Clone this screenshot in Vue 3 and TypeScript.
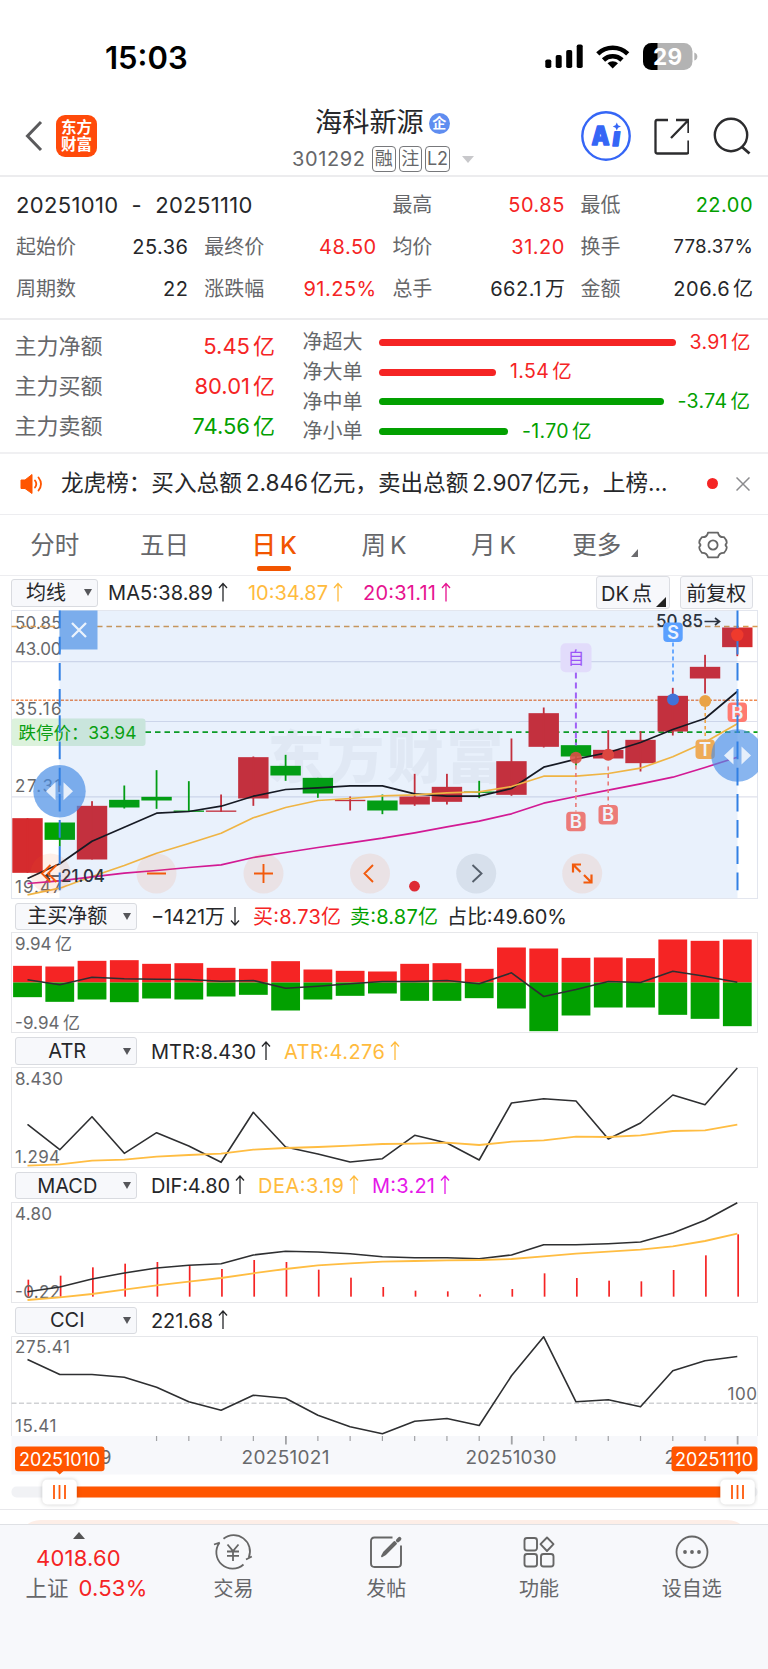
<script setup lang="ts">
type Tone = 'ink' | 'red' | 'green' | 'gold' | 'pink' | 'violet'

interface Stat { label: string; value: string; unit?: string; tone: Tone; cls?: string }
interface Reading { text: string; tone: Tone; arrow?: 'up' | 'down'; width: number }

const dayX = (i: number): number => 27 + 32.264 * i

const points = (values: number[], origin: number): string =>
  values.map((v, i) => `${dayX(i).toFixed(1)},${(origin + v / 3).toFixed(1)}`).join(' ')

const stats: Stat[] = [
  { label: '最高', value: '50.85', tone: 'red' },
  { label: '最低', value: '22.00', tone: 'green' },
  { label: '起始价', value: '25.36', tone: 'ink' },
  { label: '最终价', value: '48.50', tone: 'red' },
  { label: '均价', value: '31.20', tone: 'red' },
  { label: '换手', value: '778.37%', tone: 'ink', cls: 'compact' },
  { label: '周期数', value: '22', tone: 'ink' },
  { label: '涨跌幅', value: '91.25%', tone: 'red' },
  { label: '总手', value: '662.1', unit: '万', tone: 'ink' },
  { label: '金额', value: '206.6', unit: '亿', tone: 'ink' },
]

const mainFunds: Stat[] = [
  { label: '主力净额', value: '5.45', unit: '亿', tone: 'red' },
  { label: '主力买额', value: '80.01', unit: '亿', tone: 'red' },
  { label: '主力卖额', value: '74.56', unit: '亿', tone: 'green' },
]

const orders = [
  { label: '净超大', value: '3.91', tone: 'red', width: 297 },
  { label: '净大单', value: '1.54', tone: 'red', width: 117.5 },
  { label: '净中单', value: '-3.74', tone: 'green', width: 285 },
  { label: '净小单', value: '-1.70', tone: 'green', width: 129.5 },
]

const averages: Reading[] = [
  { text: 'MA5:38.89', tone: 'ink', arrow: 'up', width: 105 },
  { text: '10:34.87', tone: 'gold', arrow: 'up', width: 80 },
  { text: '20:31.11', tone: 'pink', arrow: 'up', width: 73 },
]
const flowReadings: Reading[] = [
  { text: '−1421万', tone: 'ink', arrow: 'down', width: 74 },
  { text: '买:8.73亿', tone: 'red', width: 88 },
  { text: '卖:8.87亿', tone: 'green', width: 88 },
  { text: '占比:49.60%', tone: 'ink', width: 120 },
]
const atrReadings: Reading[] = [
  { text: 'MTR:8.430', tone: 'ink', arrow: 'up', width: 105 },
  { text: 'ATR:4.276', tone: 'gold', arrow: 'up', width: 101 },
]
const macdReadings: Reading[] = [
  { text: 'DIF:4.80', tone: 'ink', arrow: 'up', width: 79 },
  { text: 'DEA:3.19', tone: 'gold', arrow: 'up', width: 86 },
  { text: 'M:3.21', tone: 'violet', arrow: 'up', width: 63 },
]
const cciReadings: Reading[] = [{ text: '221.68', tone: 'ink', arrow: 'up', width: 62 }]

// body top, body bottom, wick top, wick bottom, rising
type Candle = [number, number, number, number, boolean]
const candles: Candle[] = [
  [653, 817, 653, 817, true], [666, 718, 666, 738, false], [616, 777, 602, 777, true],
  [598, 621, 555, 624, false], [589, 600, 509, 625, false], [630, 634, 542, 634, false],
  [630, 634, 582, 634, true], [470, 594, 468, 616, true], [496, 525, 463, 541, false],
  [532, 579, 532, 592, false], [598, 602, 588, 630, true], [600, 630, 582, 641, false],
  [588, 612, 520, 616, true], [559, 604, 520, 612, true], [573, 577, 541, 593, false],
  [482, 583, 414, 586, true], [338, 439, 321, 441, true], [434, 468, 416, 495, false],
  [448, 474, 389, 477, true], [418, 488, 392, 513, true], [286, 393, 262, 405, true],
  [199, 234, 163, 279, true], [81, 140, 81, 167, true],
]
const ma5 = points([834, 790, 722, 680, 638, 633, 617, 587, 567, 562, 556, 556, 580, 587, 587, 564, 500, 476, 456, 426, 387, 354, 273], 600)
const ma10 = points([883, 863, 828, 795, 758, 729, 698, 652, 621, 600, 594, 586, 583, 577, 574, 558, 527, 527, 519, 503, 469, 425, 370], 600)
const ma20 = points([849, 841, 829, 818, 810, 801, 793, 771, 756, 741, 727, 713, 697, 679, 662, 640, 608, 588, 569, 550, 530, 501, 470], 600)

const flowBars: [number, number][] = [
  [214, 308], [216, 322], [199, 315], [197, 323], [208, 312], [206, 315], [220, 306], [223, 301],
  [200, 348], [225, 315], [229, 304], [231, 297], [208, 319], [206, 319], [223, 311], [159, 342],
  [162, 410], [190, 363], [189, 339], [191, 339], [135, 361], [139, 373], [135, 395],
]
const flowLine = points([256, 271, 248, 253, 254, 255, 260, 258, 281, 275, 268, 261, 261, 258, 268, 235, 306, 285, 261, 264, 230, 245, 263], 895)
const mtrLine = points([688, 764, 665, 775, 713, 753, 802, 652, 756, 777, 801, 791, 721, 744, 795, 624, 611, 618, 732, 684, 600, 629, 519], 895)
const atrLine = points([812, 808, 797, 794, 785, 780, 776, 764, 759, 756, 752, 747, 746, 743, 750, 740, 736, 725, 726, 721, 708, 706, 689], 895)
const difLine = points([350, 336, 312, 294, 279, 271, 266, 240, 229, 231, 236, 245, 248, 248, 251, 240, 209, 209, 206, 201, 174, 136, 83], 1175)
const deaLine = points([375, 367, 357, 344, 331, 320, 309, 295, 282, 271, 265, 260, 258, 256, 255, 252, 244, 236, 230, 224, 214, 198, 176], 1175)
const macdTops = [314, 302, 277, 266, 261, 272, 282, 255, 261, 284, 308, 336, 347, 349, 358, 342, 295, 309, 317, 319, 285, 241, 178]
const cciLine = points([555, 600, 600, 608, 638, 682, 707, 662, 671, 722, 757, 778, 740, 732, 753, 604, 487, 682, 676, 697, 589, 559, 546], 1175)

const priceLabels: [string, number][] = [['50.85', 628.6], ['43.00', 654.7], ['35.16', 714.7], ['27.31', 791], ['19.47', 892]]
const badges = [
  { t: 'S', x: 672.5, y: 631.7, fill: '#5aa0ff' },
  { t: 'B', x: 575.4, y: 821, fill: '#ec7b78' },
  { t: 'B', x: 607.7, y: 814.3, fill: '#ec7b78' },
  { t: 'T', x: 704.7, y: 748.7, fill: '#eeab58' },
  { t: 'B', x: 736.8, y: 711.7, fill: '#ff7a70' },
]
const ticks = Array.from({ length: 19 }, (_, k) => k + 4)
const grips = [59, 737]
</script>

<template>
  <main class="screen">
    <section class="status">
      <span class="clock">15:03</span>
      <svg class="status-icons" width="154" height="30" viewBox="544 42 154 30">
        <rect x="545.3" y="59.500" width="6" height="8.500" rx="1.800" />
        <rect x="555.7" y="55" width="6" height="13" rx="1.800" />
        <rect x="566.2" y="50" width="6" height="18" rx="1.800" />
        <rect x="576.7" y="44.500" width="6" height="23.500" rx="1.800" />
        <g fill="none" stroke="#000" stroke-width="4.600">
          <path d="M597.800 53.800a21.500 21.500 0 0 1 29.900 0" />
          <path d="M603.500 60a13.400 13.400 0 0 1 18.500 0" />
        </g>
        <path d="M607.500 63.200a7.700 7.700 0 0 1 10.500 0L612.700 68.400z" />
        <rect x="643" y="43" width="49.500" height="27" rx="8.500" fill="#b3b3b3" />
        <path d="M651.500 43H657.500V70H651.500A8.500 8.500 0 0 1 643 61.500V51.500A8.500 8.500 0 0 1 651.500 43z" />
        <path d="M694.300 52.500q3 1 3 4t-3 4z" fill="#b3b3b3" />
        <text x="667.500" y="64.500" font-size="22.500" font-weight="700" fill="#fff" text-anchor="middle" textLength="29">29</text>
      </svg>
    </section>

    <header class="header">
      <div class="header-left">
        <svg width="18" height="32" viewBox="0 0 18 32"><path d="M16 2L2.500 16L16 30" fill="none" stroke="#5a5a5c" stroke-width="3" /></svg>
        <div class="logo"><span>东方</span><span>财富</span></div>
      </div>
      <div class="title">
        <div class="name">海科新源<i class="corp">企</i></div>
        <div class="code"><span class="num">301292</span><b>融</b><b>注</b><b class="l2">L2</b>
          <svg width="12" height="7" viewBox="0 0 12 7"><path d="M0 0H12L6 7z" fill="#c8c8cb" /></svg>
        </div>
      </div>
      <div class="header-right">
        <svg class="ai" width="50" height="50" viewBox="0 0 50 50">
          <circle cx="25" cy="25" r="23.700" fill="none" stroke="#3566f6" stroke-width="2.400" />
          <g fill="#3566f6" stroke="#3566f6" stroke-width="1.400" stroke-linejoin="round" font-size="26" font-weight="900">
            <text x="10.500" y="33.500" textLength="18" lengthAdjust="spacingAndGlyphs">A</text>
            <text transform="translate(30.500 34.500) skewX(-8)" x="0" y="0">ı</text>
          </g>
          <path d="M35.800 11.500L37 14.300L40 15.500L37 16.800L35.800 19.500L34.500 16.800L31.800 15.500L34.500 14.300z" fill="#3566f6" />
        </svg>
        <svg width="36" height="37" viewBox="0 0 36 37" fill="none" stroke="#2c2c2e" stroke-width="2.300">
          <path d="M15 2H4Q2.500 2 2.500 4V33.500Q2.500 35.500 4.500 35.500H33.500Q35.500 35.500 35.500 33.500V22.500M23 2H35.500V15M35 2.500L18 20" />
        </svg>
        <svg width="38" height="38" viewBox="0 0 38 38" fill="none" stroke="#2c2c2e" stroke-width="2.400">
          <circle cx="18" cy="18" r="16.200" /><path d="M28.500 29.500L36.500 36.500" stroke-width="2.800" />
        </svg>
      </div>
    </header>

    <section class="stats">
      <div class="range">20251010&nbsp; - &nbsp;20251110</div>
      <div v-for="s in stats" :key="s.label" class="stat">
        <span>{{ s.label }}</span><em :class="[s.tone, s.cls]">{{ s.value }}<u v-if="s.unit">{{ s.unit }}</u></em>
      </div>
    </section>

    <section class="funds">
      <div class="fund-totals">
        <div v-for="f in mainFunds" :key="f.label"><span>{{ f.label }}</span><em :class="f.tone">{{ f.value }}<u>{{ f.unit }}</u></em></div>
      </div>
      <div class="fund-orders">
        <div v-for="o in orders" :key="o.label">
          <span>{{ o.label }}</span>
          <i :class="['bar', 'bg-' + o.tone]" :style="{ width: o.width + 'px' }"></i>
          <em :class="o.tone">{{ o.value }}<u>亿</u></em>
        </div>
      </div>
    </section>

    <section class="news">
      <svg width="24" height="22" viewBox="0 0 24 22">
        <path d="M1 7H5L12 1.500V20.500L5 15.500H1z" fill="#f50" stroke="#f50" stroke-linejoin="round" />
        <path d="M15 7.500q2.600 3.500 0 7M18.500 4.500q5 6.500 0 13" fill="none" stroke="#f50" stroke-width="1.800" stroke-linecap="round" />
      </svg>
      <p>龙虎榜：买入总额<u>2.846</u>亿元，卖出总额<u>2.907</u>亿元，上榜...</p>
      <i class="dot"></i>
      <svg width="14" height="14" viewBox="0 0 14 14"><path d="M.5.500L13.500 13.500M13.500.500L.5 13.500" stroke="#8b8b8e" stroke-width="1.500" /></svg>
    </section>

    <nav class="tabs">
      <span>分时</span><span>五日</span><span class="on">日<u>K</u></span><span>周<u>K</u></span><span>月<u>K</u></span>
      <span>更多<svg width="7" height="8" viewBox="0 0 7 8"><path d="M7 0V8H0z" fill="#6b6b6e" /></svg></span>
      <span>
        <svg class="gear" width="30" height="28" viewBox="-15 -14 30 28" fill="none" stroke="#666" stroke-width="1.800" stroke-linejoin="round">
          <path d="M-5 -12.300H5Q6 -7.500 11 -7.800Q14.500 -4 13.500 -1.500Q11.500 0 13.500 1.500Q14.500 4 11 7.800Q6 7.500 5 12.300H-5Q-6 7.500 -11 7.800Q-14.500 4 -13.500 1.500Q-11.500 0 -13.500 -1.500Q-14.500 -4 -11 -7.800Q-6 -7.500 -5 -12.300z" />
          <circle r="4.600" />
        </svg>
      </span>
    </nav>

    <div class="row tools">
      <div class="select short"><span>均线</span><i></i></div>
      <div class="readings">
        <svg v-for="r in averages" :key="r.text" :class="r.tone" :width="r.width + 20" height="27" :viewBox="`0 0 ${r.width + 20} 27`">
          <text x="0" y="21" font-size="20" fill="currentColor" :textLength="r.width">{{ r.text }}</text>
          <path :transform="`translate(${r.width + 10} 3.5)`" d="M0 19V1M-4 5.500L0 1L4 5.500" fill="none" stroke="currentColor" stroke-width="1.300" />
        </svg>
      </div>
      <button class="dk">DK<u>点</u><svg width="10" height="10" viewBox="0 0 10 10"><path d="M10 0V10H0z" fill="#222" /></svg></button>
      <button>前复权</button>
    </div>

    <svg class="chart" width="747" height="289" viewBox="10.500 609.500 747 289">
      <rect x="11" y="610" width="746" height="288" fill="#fff" stroke="#e3e6ee" />
      <g stroke="#dfe1ec" stroke-width="1.200"><path d="M11 661.200H757M11 721H757M11 796.300H757" /></g>
      <text class="mark" x="267" y="777" font-size="57" font-weight="900" textLength="236">东方财富</text>
      <g class="axis" font-size="17">
        <text v-for="p in priceLabels" :key="p[0]" x="14.500" :y="p[1]" textLength="46.500">{{ p[0] }}</text>
      </g>
      <path d="M11 626H757" stroke="#d89a50" stroke-width="1.500" stroke-dasharray="5.500 4" />
      <path d="M11 699.700H757" stroke="#f08a50" stroke-width="1.500" stroke-dasharray="3 1.500" />
      <rect x="11" y="718" width="134" height="27.500" rx="3" fill="#dcf2dc" />
      <path d="M145 731.700H757" stroke="#0aa014" stroke-width="1.700" stroke-dasharray="5.500 4" />
      <g v-for="(c, i) in candles" :key="i" :fill="c[4] ? '#d52b2e' : '#02a300'">
        <rect :x="dayX(i) - 15.200" :y="600 + c[0] / 3" width="30.400" :height="(c[1] - c[0]) / 3" />
        <rect :x="dayX(i) - 0.900" :y="600 + c[2] / 3" width="1.800" :height="(c[3] - c[2]) / 3" />
      </g>
      <rect x="59" y="610.500" width="678" height="287" fill="#1a6fdc" opacity=".095" />
      <g fill="none" stroke-width="1.700" stroke-linejoin="round">
        <polyline :points="ma5" stroke="#161a24" /><polyline :points="ma10" stroke="#efb444" /><polyline :points="ma20" stroke="#d21a94" />
      </g>
      <text x="18" y="738" font-size="17.500" fill="#0a9f12" textLength="118">跌停价：33.94</text>
      <g font-size="17" font-weight="500" fill="#2b3340">
        <text x="655.500" y="626.700" textLength="47">50.85</text><path d="M704 621H719M714.500 617.500L719 621L714.500 624.500" fill="none" stroke="#2b3340" stroke-width="1.700" />
        <text x="60.500" y="881.300" textLength="44">21.04</text><path d="M60 875.500H45M49.500 872L45 875.500L49.500 879" fill="none" stroke="#2b3340" stroke-width="1.700" />
      </g>

      <g fill="none" stroke-width="1.600">
        <path d="M575.400 672V745" stroke="#a060f5" stroke-width="2" stroke-dasharray="6 4" />
        <path d="M672.500 642V681" stroke="#4a98ff" stroke-dasharray="4 3" />
        <path d="M704.700 706V739" stroke="#eda445" stroke-dasharray="3.500 3" />
        <path d="M575.400 765V811M607.700 766V805" stroke="#e97977" stroke-dasharray="4 3.500" />
      </g>
      <circle cx="575.400" cy="757.300" r="6" fill="#dc4f45" opacity=".9" /><circle cx="607.700" cy="754.300" r="6" fill="#dc4640" />
      <circle cx="672.500" cy="699" r="6" fill="#4273d8" /><circle cx="704.700" cy="700.500" r="6" fill="#e9a345" />
      <rect x="560" y="642.700" width="31" height="29" rx="5" fill="#e2dcfb" />
      <text x="575.500" y="663.500" font-size="16.500" fill="#9b55f7" text-anchor="middle">自</text>
      <g v-for="(b, i) in badges" :key="i">
        <rect :x="b.x - 9.700" :y="b.y - 9.700" width="19.400" height="19.400" rx="4" :fill="b.fill" />
        <text :x="b.x" :y="b.y + 6.500" font-size="18.500" font-weight="600" fill="#eef3fd" text-anchor="middle">{{ b.t }}</text>
      </g>

      <g fill="#f26522" fill-opacity=".1">
        <circle cx="50" cy="873" r="20" /><circle cx="156" cy="873" r="20" /><circle cx="263" cy="873" r="20" />
        <circle cx="369.500" cy="873" r="20" /><circle cx="581.700" cy="873" r="20" />
      </g>
      <circle cx="475.700" cy="873" r="20" fill="#22364f" opacity=".09" />
      <g fill="none" stroke="#f25a0c" stroke-width="1.900">
        <path d="M50 864.500L41.500 873L50 881.500M56 864.500L47.500 873L56 881.500M146.500 873H165.500M253.500 873H272.500M263 863.500V882.500M372.500 864.500L364 873L372.500 881.500" />
        <path d="M572.500 872V864H580.500M572.500 864L580 871.500M591 874V882H583M591 882L583.500 874.500" stroke-width="2.200" />
      </g>
      <path d="M472 864.500L481 873L472 881.500" fill="none" stroke="#555f6b" stroke-width="1.900" />
      <circle cx="414" cy="885.700" r="5.400" fill="#de2b35" />

      <rect x="59" y="610" width="38" height="39" fill="#7badec" />
      <path d="M71.500 622.500L85.500 636.500M85.500 622.500L71.500 636.500" stroke="#eaf2fc" stroke-width="2.300" />
      <circle cx="59" cy="790.800" r="26.200" fill="#4a8fe6" opacity=".7" /><circle cx="737" cy="755" r="26.200" fill="#4a8fe6" opacity=".66" />
      <g stroke="#3280e4" stroke-width="2" stroke-dasharray="17.700 8.500"><path d="M59.200 610V890M737 610V890" /></g>
      <circle cx="736.800" cy="634.500" r="6.200" fill="#ef3a2c" />
      <path v-for="c in [[59, 790.800], [737, 755]]" :key="c[0]" :transform="`translate(${c[0]} ${c[1]})`" d="M-4 -9V9L-13.500 0zM4 -9V9L13.500 0z" fill="#e6effb" />
    </svg>

    <div class="row">
      <div class="select"><span>主买净额</span><i></i></div>
      <div class="readings tight">
        <svg v-for="r in flowReadings" :key="r.text" :class="r.tone" :width="r.width + (r.arrow ? 19 : 0)" height="27" :viewBox="`0 0 ${r.width + (r.arrow ? 19 : 0)} 27`">
          <text x="0" y="20.500" font-size="20" fill="currentColor" :textLength="r.width">{{ r.text }}</text>
          <path v-if="r.arrow" :transform="`translate(${r.width + 10} 3)`" d="M0 1V19M-4 14.500L0 19L4 14.500" fill="none" stroke="currentColor" stroke-width="1.300" />
        </svg>
      </div>
    </div>
    <svg class="chart" width="747" height="101" viewBox="10.500 932.500 747 101">
      <rect x="11" y="933" width="746" height="100" fill="#fff" stroke="#e6e7ea" />
      <g v-for="(b, i) in flowBars" :key="i">
        <rect :x="dayX(i) - 14.400" :y="895 + b[0] / 3" width="28.800" :height="983 - 895 - b[0] / 3" fill="#f52424" />
        <rect :x="dayX(i) - 14.400" y="983" width="28.800" :height="895 + b[1] / 3 - 983" fill="#02a000" />
      </g>
      <polyline class="line" :points="flowLine" />
      <g class="axis" font-size="17">
        <text x="14.500" y="950.700" textLength="36.500">9.94</text><text x="54.500" y="950.700">亿</text>
        <text x="14.500" y="1029.300" textLength="44.500">-9.94</text><text x="62.500" y="1029.300">亿</text>
      </g>
    </svg>

    <div class="row">
      <div class="select"><span>ATR</span><i></i></div>
      <div class="readings">
        <svg v-for="r in atrReadings" :key="r.text" :class="r.tone" :width="r.width + 20" height="27" :viewBox="`0 0 ${r.width + 20} 27`">
          <text x="0" y="20.500" font-size="20" fill="currentColor" :textLength="r.width">{{ r.text }}</text>
          <path :transform="`translate(${r.width + 10} 3)`" d="M0 19V1M-4 5.500L0 1L4 5.500" fill="none" stroke="currentColor" stroke-width="1.300" />
        </svg>
      </div>
    </div>
    <svg class="chart" width="747" height="101" viewBox="10.500 1067 747 101">
      <rect x="11" y="1067.500" width="746" height="100" fill="#fff" stroke="#e6e7ea" />
      <g class="axis" font-size="17"><text x="14.500" y="1085" textLength="48">8.430</text><text x="14.500" y="1163.300" textLength="45">1.294</text></g>
      <polyline class="line" :points="mtrLine" /><polyline class="line yellow" :points="atrLine" />
    </svg>

    <div class="row">
      <div class="select"><span>MACD</span><i></i></div>
      <div class="readings">
        <svg v-for="r in macdReadings" :key="r.text" :class="r.tone" :width="r.width + 20" height="27" :viewBox="`0 0 ${r.width + 20} 27`">
          <text x="0" y="20.500" font-size="20" fill="currentColor" :textLength="r.width">{{ r.text }}</text>
          <path :transform="`translate(${r.width + 10} 3)`" d="M0 19V1M-4 5.500L0 1L4 5.500" fill="none" stroke="currentColor" stroke-width="1.300" />
        </svg>
      </div>
    </div>
    <svg class="chart" width="747" height="101" viewBox="10.500 1202 747 101">
      <rect x="11" y="1202.500" width="746" height="100" fill="#fff" stroke="#e6e7ea" />
      <rect v-for="(t, i) in macdTops" :key="i" :x="dayX(i)" :y="1175 + t / 3" width="1.700" :height="(365 - t) / 3" fill="#f52424" />
      <g class="axis" font-size="17"><text x="14.500" y="1219.700" textLength="37">4.80</text><text x="14.500" y="1298" textLength="45">-0.22</text></g>
      <polyline class="line" :points="difLine" /><polyline class="line yellow" :points="deaLine" />
    </svg>

    <div class="row">
      <div class="select"><span>CCI</span><i></i></div>
      <div class="readings">
        <svg v-for="r in cciReadings" :key="r.text" :class="r.tone" :width="r.width + 20" height="27" :viewBox="`0 0 ${r.width + 20} 27`">
          <text x="0" y="20.500" font-size="20" fill="currentColor" :textLength="r.width">{{ r.text }}</text>
          <path :transform="`translate(${r.width + 10} 3)`" d="M0 19V1M-4 5.500L0 1L4 5.500" fill="none" stroke="currentColor" stroke-width="1.300" />
        </svg>
      </div>
    </div>
    <svg class="chart" width="747" height="173" viewBox="10.500 1336.500 747 173">
      <path d="M11 1436.500V1337H757V1436.500" fill="#fff" stroke="#e6e7ea" />
      <rect x="11" y="1436.500" width="746" height="38.500" fill="#f7f8fb" />
      <path d="M11 1403.700H757" stroke="#d0d1d4" stroke-width="1.500" stroke-dasharray="5 2.500" />
      <g class="axis" font-size="17">
        <text x="14.500" y="1353.700" textLength="55">275.41</text><text x="14.500" y="1432" textLength="41.500">15.41</text>
        <text x="727" y="1400" textLength="29.500">100</text>
      </g>
      <polyline class="line" :points="cciLine" />
      <rect v-for="i in ticks" :key="i" :x="dayX(i) - 0.600" y="1436.500" :width="(i - 1) % 7 === 0 ? 1.800 : 1.200" :height="(i - 1) % 7 === 0 ? 8.500 : 5" fill="#a2a3a6" />
      <g class="axis" font-size="19">
        <text x="20" y="1464.300" textLength="91">20251009</text><text x="241" y="1464.300" textLength="88">20251021</text>
        <text x="465" y="1464.300" textLength="91">20251030</text><text x="664" y="1464.300" textLength="84">20251110</text>
      </g>
      <g fill="#ff5500">
        <rect x="14.500" y="1447" width="89.500" height="24.700" rx="3" /><rect x="671" y="1447" width="86" height="24.700" rx="3" />
        <path d="M55 1471H63.500L59.200 1475zM733 1471H741.500L737.200 1475z" />
      </g>
      <g fill="#fff" font-size="18"><text x="18.500" y="1466" textLength="81">20251010</text><text x="674.500" y="1466" textLength="78">20251110</text></g>
      <rect x="11" y="1487" width="746" height="11" rx="5" fill="#f1f2f5" /><rect x="59" y="1487" width="678" height="11" fill="#ff5500" />
      <g v-for="g in grips" :key="g" :transform="`translate(${g} 1492.500)`">
        <rect class="grip" x="-17.200" y="-12.500" width="34.500" height="25" rx="5" fill="#fff" />
        <path d="M-5.500 -7V7M0 -7V7M5.500 -7V7" stroke="#ff5a0a" stroke-width="1.800" />
      </g>
    </svg>

    <div class="peek"><div></div></div>

    <footer class="bottom">
      <div class="index">
        <svg width="12" height="7" viewBox="0 0 12 7"><path d="M0 7H12L6 0z" fill="#555" /></svg>
        <strong>4018.60</strong>
        <span>上证<em>0.53%</em></span>
      </div>
      <div class="item">
        <svg width="40" height="36" viewBox="-20 -18 40 36" fill="none" stroke="#666" stroke-width="1.800">
          <path d="M-9.500 -13.300A16.300 16.300 0 0 1 15.800 5.500M13 7.500L18.800 4.500M10.500 12.500A16.300 16.300 0 0 1 -13.500 -9.300M-19 -7.500L-13.200 -9.300" />
          <path d="M-5.500 -7.500L0 -1L5.500 -7.500M0 -1V9M-6 -.5H6M-6 3.800H6" />
        </svg><span>交易</span>
      </div>
      <div class="item">
        <svg width="36" height="36" viewBox="-18 -18 36 36" fill="none" stroke="#666" stroke-width="1.900">
          <path d="M6.500 -14.500H-11.500Q-15 -14.500 -15 -11V11.500Q-15 15 -11.500 15H11.500Q15 15 15 11.500V-6.500" />
          <path d="M-4 4.300L-2 .5L8.500 -10L10 -8.500L-.5 2.200z" fill="#666" stroke-linejoin="round" />
          <path d="M11.800 -11.500L13.500 -13.200" stroke-width="3.800" stroke-linecap="round" />
        </svg><span>发帖</span>
      </div>
      <div class="item">
        <svg width="36" height="36" viewBox="-18 -18 36 36" fill="none" stroke="#666" stroke-width="1.900">
          <rect x="-14.500" y="-14" width="12.500" height="12.500" rx="2.500" /><rect x="-14.500" y="2" width="12.500" height="12.500" rx="2.500" />
          <rect x="2" y="2" width="12.500" height="12.500" rx="2.500" /><path d="M8 -14.500L14.500 -7.800L8 -1L1.500 -7.800z" stroke-linejoin="round" />
        </svg><span>功能</span>
      </div>
      <div class="item">
        <svg width="36" height="36" viewBox="-18 -18 36 36" fill="#666">
          <circle r="15.500" fill="none" stroke="#666" stroke-width="1.800" /><circle cx="-7" r="1.900" /><circle r="1.900" /><circle cx="7" r="1.900" />
        </svg><span>设自选</span>
      </div>
    </footer>
  </main>
</template>

<style>
body { margin: 0; background: #fff; }
</style>

<style scoped>
.screen { width: 768px; height: 1669px; overflow: hidden; display: flex; flex-direction: column; background: #fff; color: #26272a; font-family: Inter, "Noto Sans CJK SC", sans-serif; font-size: 20px; line-height: 1; }
.screen > * { flex: none; box-sizing: border-box; }
em, i, u { font-style: normal; text-decoration: none; }
svg { display: block; flex: none; }
svg text { font-family: Inter, "Noto Sans CJK SC", sans-serif; }
.ink { color: #26272a; }
.red { color: #f52424; }
.green { color: #02a000; }
.gold { color: #ffbb3d; }
.pink { color: #e6128f; }
.violet { color: #e517e8; }
.bg-red { background: #f52424; }
.bg-green { background: #02a000; }

.status { height: 88px; display: flex; justify-content: space-between; align-items: center; padding: 26px 70px 0 105px; }
.clock { font-size: 31px; font-weight: 600; color: #000; }

.header { height: 89px; border-bottom: 2px solid #ececee; display: grid; grid-template-columns: 1fr 180px 1fr; padding: 0 17px 0 25px; }
.header-left, .header-right { display: flex; align-items: center; padding-top: 9px; }
.header-left { gap: 13px; }
.header-right { justify-content: flex-end; gap: 24px; }
.ai { margin-right: -1.500px; }
.logo { width: 41px; height: 42px; border-radius: 9px; background: #ff4a0a; color: #fff; font-size: 15.500px; font-weight: 700; display: flex; flex-direction: column; align-items: center; justify-content: center; gap: 2px; }
.title { display: flex; flex-direction: column; margin-left: -6px; }
.name { display: flex; align-items: center; gap: 5px; font-size: 27.200px; margin: 21px 0 0 23px; height: 28px; }
.corp { width: 21px; height: 21px; border-radius: 50%; background: #5f8df0; color: #fff; font-size: 14px; font-weight: 700; display: flex; align-items: center; justify-content: center; }
.code { display: flex; align-items: center; gap: 3px; height: 26px; margin-top: 9px; color: #66676a; }
.num { font-size: 20px; letter-spacing: .6px; margin-right: 4px; width: 73px; }
.code b { box-sizing: border-box; width: 23.500px; height: 26px; border: 1px solid #77787b; border-radius: 4px; font-weight: 400; font-size: 18px; display: flex; align-items: center; justify-content: center; }
.code .l2 { width: 25px; }
.code svg { margin-left: 9px; }

.stats { height: 143px; padding: 7px 15.500px 6px 16px; border-bottom: 2px solid #ececee; display: grid; grid-template-columns: repeat(4, 172px); column-gap: 16.200px; grid-auto-rows: 42px; align-items: center; }
.range { grid-column: span 2; font-size: 22px; letter-spacing: .35px; }
.stat { display: flex; justify-content: space-between; align-items: center; color: #66676a; }
.stat em { font-size: 20px; letter-spacing: .5px; margin-right: -.5px; }
.stat u, .funds u { margin-left: 3px; letter-spacing: 0; }
.stat .compact { font-size: 18.700px; letter-spacing: .3px; }

.funds { height: 134px; border-bottom: 2px solid #f0f0f2; display: flex; color: #66676a; }
.fund-totals { width: 275px; padding: 6px 0 0 14.500px; box-sizing: border-box; font-size: 22px; }
.fund-totals div { height: 40px; display: flex; align-items: center; justify-content: space-between; }
.fund-orders { padding: 7.500px 0 0 27.500px; }
.fund-orders div { height: 29.700px; display: flex; align-items: center; }
.fund-orders em { font-size: 19.500px; letter-spacing: .35px; margin-left: 14px; white-space: nowrap; }
.bar { height: 7px; border-radius: 3.500px; margin-left: 16px; }

.news { height: 61px; border-bottom: 1px solid #ededf0; display: flex; align-items: center; padding: 0 0 1px 20px; }
.news p { flex: none; margin: 0 0 0 17px; width: 620px; font-size: 22.600px; white-space: nowrap; }
.news u { margin: 0 2px 0 4px; }
.dot { flex: none; width: 11px; height: 11px; border-radius: 50%; background: #f52424; margin: 0 18px 0 25.500px; }

.tabs { height: 61px; border-bottom: 1px solid #ededf0; display: grid; grid-template-columns: repeat(7, 109.700px); justify-content: start; align-items: center; font-size: 24.500px; color: #66676a; }
.tabs span { position: relative; display: flex; align-items: center; justify-content: center; height: 58px; }
.tabs u { margin-left: 4px; }
.tabs span:nth-child(6) { left: 2px; }
.tabs span:nth-child(6) svg { margin: 16px 0 0 10px; }
.tabs .on { color: #f25500; font-weight: 500; }
.tabs .on::after { content: ""; position: absolute; left: 38px; bottom: 3px; width: 34px; height: 5px; border-radius: 2px; background: #f25500; }

.row { height: 33.700px; display: flex; align-items: center; padding: 2px 14.500px 0; }
.tools { height: 33.500px; padding: 0 15px 0 11px; }
.select { box-sizing: border-box; width: 122px; height: 27.500px; border: 1px solid #d9dbe0; border-radius: 3px; background: #f7f8fb; display: flex; align-items: center; padding-right: 4.500px; }
.select span { flex: 1; text-align: center; padding-right: 4px; }
.select i { border: 4px solid transparent; border-top: 7px solid #55565a; border-bottom: 0; }
.select.short { width: 86.500px; }
.readings { display: flex; gap: 8px; margin-left: 14.500px; flex: 1; }
.readings.tight { gap: 9px; }
.tools .readings { gap: 15px; margin-left: 10.500px; }
button { height: 33px; width: 73.500px; box-sizing: border-box; padding: 2px 0 0; border: 1px solid #dcdee3; border-radius: 3px; background: #f7f8fb; font: inherit; color: inherit; margin-left: 10px; white-space: nowrap; }
.dk { display: flex; padding: 7px 3px 0 4px; }
.dk u { margin-left: 3px; }
.dk svg { margin: 13px 0 0 auto; }

.chart { margin-left: 10.500px; }
.axis { fill: #68696c; }
.mark { fill: #1c2b44; opacity: .035; }
.line { fill: none; stroke: #2e2f31; stroke-width: 1.600; stroke-linejoin: round; }
.yellow { stroke: #ffbd42; stroke-width: 1.800; }
.grip { filter: drop-shadow(0 0 2px rgba(0, 0, 0, .2)); }

.peek { flex: 1 1 0 !important; min-height: 0; border-top: 1px solid #e8e8eb; padding: 10px 17px 0; overflow: hidden; }
.peek div { height: 50px; border-radius: 24px; background: #fdeee7; }
.bottom { height: 145.500px; background: #f7f8fb; border-top: 1px solid #dfe1e5; display: grid; grid-template-columns: 157px repeat(4, 152.800px); color: #66676a; }
.index { display: flex; flex-direction: column; align-items: center; padding-top: 7px; color: #f52424; }
.index strong { font-size: 22px; font-weight: 400; margin-top: 8px; letter-spacing: .2px; }
.index span { font-size: 21.500px; color: #66676a; margin: 8px 0 0 16px; white-space: nowrap; }
.index em { color: #f52424; font-size: 22px; margin-left: 10px; letter-spacing: .2px; }
.item { display: flex; flex-direction: column; align-items: center; padding-top: 9.500px; }
.item span { margin-top: 9px; }
</style>
